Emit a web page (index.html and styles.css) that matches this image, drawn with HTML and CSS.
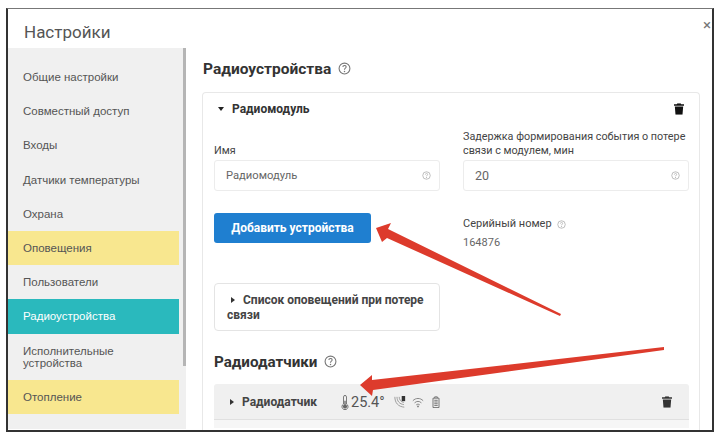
FILE: index.html
```html
<!DOCTYPE html>
<html lang="ru">
<head>
    <meta charset="UTF-8">
    <meta name="viewport" content="width=device-width, initial-scale=1.0">
    <title>Настройки</title>
    <link rel="stylesheet" href="styles.css">
</head>
<body>
    <div class="window">
        <header class="window-head">
            <h1>Настройки</h1>
            <span class="close">×</span>
        </header>
        <div class="window-body">
            <nav class="menu">
                <div class="menu-items">
                    <a class="item">Общие настройки</a>
                    <a class="item">Совместный доступ</a>
                    <a class="item">Входы</a>
                    <a class="item">Датчики температуры</a>
                    <a class="item">Охрана</a>
                    <a class="item warn">Оповещения</a>
                    <a class="item">Пользователи</a>
                    <a class="item active">Радиоустройства</a>
                    <a class="item tall">Исполнительные устройства</a>
                    <a class="item warn">Отопление</a>
                </div>
                <div class="scroll"><div class="thumb"></div></div>
            </nav>
            <main class="content">
                <h2 class="title">Радиоустройства <svg class="help big" viewBox="0 0 12 12"><use href="#q"/></svg></h2>
                <section class="panel">
                    <div class="panel-head">
                        <span class="caret down"></span>
                        <b>Радиомодуль</b>
                        <svg class="trash" viewBox="0 0 12 14"><use href="#bin"/></svg>
                    </div>
                    <div class="fields">
                        <div class="field">
                            <label>Имя</label>
                            <div class="input">Радиомодуль <svg class="help" viewBox="0 0 12 12"><use href="#q"/></svg></div>
                        </div>
                        <div class="field">
                            <label>Задержка формирования события о потере связи с модулем, мин</label>
                            <div class="input"><span class="num">20</span> <svg class="help" viewBox="0 0 12 12"><use href="#q"/></svg></div>
                        </div>
                    </div>
                    <div class="fields second">
                        <div class="field">
                            <button type="button" class="btn">Добавить устройства</button>
                        </div>
                        <div class="field serial">
                            <label>Серийный номер <svg class="help" viewBox="0 0 12 12"><use href="#q"/></svg></label>
                            <p>164876</p>
                        </div>
                    </div>
                    <div class="notify"><span class="caret"></span><b>Список оповещений при потере связи</b></div>
                    <h2 class="title sub">Радиодатчики <svg class="help big" viewBox="0 0 12 12"><use href="#q"/></svg></h2>
                    <div class="sensor">
                        <span class="caret"></span>
                        <b>Радиодатчик</b>
                        <svg class="thermo" viewBox="0 0 8 16">
                            <path d="M2.500 2a1.500 1.500 0 0 1 3 0v7.600a3.200 3.200 0 1 1-3 0z" fill="#fff" stroke="#666" stroke-width="1"/>
                            <path d="M3.300 6h1.400v4.200a2.200 2.200 0 1 1-1.400 0z" fill="#666"/>
                        </svg>
                        <span class="temp">25.4°</span>
                        <svg class="state" viewBox="0 0 14 14">
                            <path d="M1 1c0 7 4 11.500 11 12M3.500 1c0 5 3 8.500 8 9M6 1c0 3 2 6 5.500 6.500" fill="none" stroke="#999" stroke-width="1.100"/>
                            <rect x="9" y="0" width="4" height="6" fill="#333"/>
                        </svg>
                        <svg class="state" viewBox="0 0 14 14">
                            <path d="M1 5.500c3.500-3.500 8.500-3.500 12 0M3 8c2.500-2.300 5.500-2.300 8 0M5 10.300c1.300-1 2.700-1 4 0" fill="none" stroke="#777" stroke-width="1"/>
                            <circle cx="7" cy="12.200" r="1" fill="#777"/>
                        </svg>
                        <svg class="state" viewBox="0 0 14 14">
                            <path d="M3.500 2.500h7v11h-7z M5.500 2.500v-1.500h3v1.500" fill="none" stroke="#666" stroke-width="1"/>
                            <path d="M5 5h4M5 7h4M5 9h4M5 11h4" stroke="#666" stroke-width="1"/>
                        </svg>
                        <svg class="trash small" viewBox="0 0 12 14"><use href="#bin"/></svg>
                    </div>
                    <div class="sensor-rest"></div>
                </section>
            </main>
        </div>
        <svg class="arrows" viewBox="0 0 724 442">
            <path d="M561 314 L560 316 L387 238 L382 242 L376 228 L391 223 L388 229 Z" fill="#dd3b2c"/>
            <path d="M664 347 L664 350 L373 390 L372 396 L360 385 L372 375 L372 380 Z" fill="#dd3b2c"/>
        </svg>
    </div>

    <svg class="defs" width="0" height="0">
        <symbol id="q" viewBox="0 0 12 12">
            <circle cx="6" cy="6" r="5" fill="none" stroke="currentColor" stroke-width="1"/>
            <path d="M4.500 4.700c0-2 3-2 3-.2 0 1.200-1.500 1.200-1.500 2.600" fill="none" stroke="currentColor" stroke-width="1"/>
            <circle cx="6" cy="8.800" r=".7" fill="currentColor"/>
        </symbol>
        <symbol id="bin" viewBox="0 0 12 14">
            <path d="M4 0h4l.7 1.300H12v1.700H0V1.300h3.300zM1 4h10l-.8 10H1.800z" fill="currentColor"/>
        </symbol>
    </svg>
</body>
</html>
```

FILE: styles.css
```css
html, body {
    margin: 0;
    height: 100%;
    background: #fff;
    overflow: hidden;
}
body {
    font-family: Roboto, "Open Sans", sans-serif;
    color: #333;
    padding: 8px 10px 0 6px;
    box-sizing: border-box;
}
.window {
    position: relative;
    height: 424px;
    box-sizing: border-box;
    border: 2px solid #333;
    border-top: 1px solid #777;
    background: #fff;
    overflow: hidden;
}
.window-head {
    height: 39px;
    position: relative;
}
.window-head h1 {
    margin: 0;
    padding: 12px 0 0 16px;
    font-size: 17px;
    line-height: 22px;
    font-weight: 400;
    color: #555;
}
.close {
    position: absolute;
    top: 8px;
    right: 1px;
    font-size: 15px;
    line-height: 16px;
    color: #777;
}
.window-body {
    display: flex;
    height: 381px;
}
.menu {
    width: 178px;
    flex: none;
    display: flex;
    background: #f0f0f0;
}
.menu-items {
    width: 171px;
    flex: none;
    padding-top: 12px;
}
.item {
    display: flex;
    align-items: center;
    height: 34.200px;
    padding-left: 15px;
    padding-right: 30px;
    box-sizing: border-box;
    font-family: "Liberation Sans", Arial, sans-serif;
    font-size: 11.500px;
    line-height: 12px;
    color: #555;
}
.item.warn {
    background: #f8e78f;
}
.item.active {
    background: #2ab9bd;
    color: #fff;
}
.item.tall {
    height: 46px;
}
.scroll {
    flex: 1;
    padding-left: 4px;
}
.thumb {
    width: 3px;
    height: 318px;
    background: #b5b5b5;
}
.content {
    flex: 1;
    padding: 11px 12px 0 16px;
    min-width: 0;
}
.title {
    margin: 0 0 0 1px;
    font-size: 15.500px;
    line-height: 20px;
    font-weight: 700;
    color: #333;
}
.help {
    width: 9px;
    height: 9px;
    color: #aaa;
    vertical-align: middle;
}
.help.big {
    width: 13px;
    height: 13px;
    margin-left: 3px;
    color: #777;
    vertical-align: -1px;
}
.panel {
    margin-top: 13px;
    height: 340px;
    box-sizing: border-box;
    border: 1px solid #e8e8e8;
    border-bottom: 0;
    border-radius: 4px 4px 0 0;
    padding: 0 11px;
}
.panel-head {
    display: flex;
    align-items: center;
    gap: 8px;
    height: 37px;
    padding: 0 0 6px 4px;
    box-sizing: border-box;
    font-size: 12px;
}
.caret {
    display: inline-block;
    flex: none;
    width: 0;
    height: 0;
    border-top: 3px solid transparent;
    border-bottom: 3px solid transparent;
    border-left: 4px solid #333;
}
.caret.down {
    border-left: 3.500px solid transparent;
    border-right: 3.500px solid transparent;
    border-top: 4px solid #222;
    border-bottom: 0;
}
.trash {
    width: 10px;
    height: 12px;
    margin-left: auto;
    margin-right: 4px;
    color: #111;
}
.trash.small {
    color: #333;
    margin-right: 17px;
}
.fields {
    display: flex;
    gap: 23px;
    align-items: flex-end;
}
.field {
    width: 226px;
    flex: none;
    font-size: 11.200px;
}
.field label {
    display: block;
    font-size: 10.800px;
    line-height: 14px;
    margin-bottom: 2px;
    color: #444;
}
.input {
    display: flex;
    align-items: center;
    justify-content: space-between;
    height: 31px;
    box-sizing: border-box;
    border: 1px solid #ececec;
    border-radius: 3px;
    padding: 0 8px 0 11px;
    color: #666;
}
.num {
    font-size: 12.500px;
}
.second {
    margin-top: 22px;
    align-items: flex-start;
}
.btn {
    display: block;
    width: 157px;
    height: 30px;
    border: none;
    border-radius: 3px;
    background: #1f7fd0;
    color: #fff;
    font-family: inherit;
    font-size: 12px;
    font-weight: 700;
}
.serial p {
    margin: 0;
    color: #666;
    font-size: 11px;
}
.serial label {
    margin: 4px 0 5px;
    font-size: 11px;
}
.serial .help {
    margin-left: 3px;
}
.notify {
    width: 226px;
    height: 48px;
    box-sizing: border-box;
    margin-top: 34px;
    border: 1px solid #e4e4e4;
    border-radius: 4px;
    padding: 9px 12px 0;
    font-size: 12px;
    line-height: 15px;
    color: #444;
}
.notify .caret {
    margin: 0 8px 1px 4px;
}
.sub {
    margin: 21px 0 0;
    font-size: 15.200px;
}
.sensor {
    display: flex;
    align-items: center;
    width: 475px;
    height: 36px;
    margin-top: 12px;
    padding: 1px 0 0 16px;
    box-sizing: border-box;
    background: #f0f0f0;
    border-radius: 3px 3px 0 0;
    border-bottom: 1px solid #e0e0e0;
    font-size: 12px;
    color: #444;
}
.sensor b {
    margin-left: 8px;
    width: 99px;
}
.thermo {
    width: 8px;
    height: 15px;
}
.temp {
    margin-left: 2px;
    width: 43px;
    font-size: 14.500px;
    color: #555;
}
.state {
    width: 12px;
    height: 12px;
    margin-right: 6px;
}
.sensor-rest {
    width: 475px;
    height: 8px;
    background: #f6f6f6;
}
.arrows {
    position: absolute;
    left: -8px;
    top: -9px;
    width: 724px;
    height: 442px;
    pointer-events: none;
}
.defs {
    position: absolute;
}
```
